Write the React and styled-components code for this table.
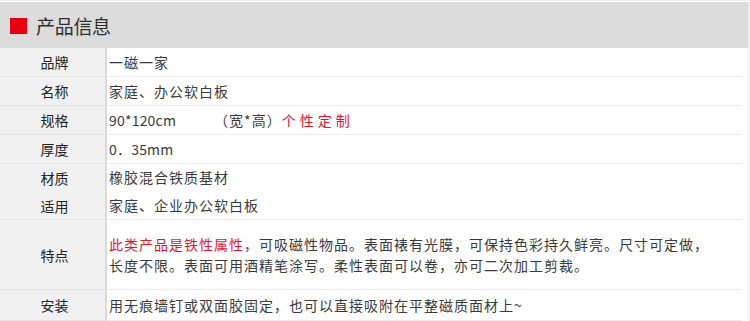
import React from "react";
import styled, { createGlobalStyle } from "styled-components";

const Global = createGlobalStyle`
  body {
    margin: 0;
    background: #fff;
    font-family: "Noto Sans CJK SC", "Noto Sans", sans-serif;
    color: #333;
  }
`;

const Page = styled.div`
  width: 748px;
  padding-top: 1px;
  border-top: 1px solid #eee;
  border-right: 2px solid #f0f0f0;
`;

const Header = styled.header`
  display: flex;
  align-items: center;
  height: 46px;
  background: #dcdcdc;
  padding-left: 10px;
`;

const Square = styled.span`
  width: 17px;
  height: 16px;
  background: #e60012;
  margin-right: 9px;
  margin-top: 2px;
`;

const Title = styled.h2`
  margin: 0;
  font-size: 19px;
  font-weight: 400;
  color: #2e2e2e;
  line-height: 1;
  letter-spacing: -0.3px;
`;

const Table = styled.div`
  display: grid;
  grid-template-columns: 107px 1fr;
`;

const Label = styled.div`
  display: flex;
  align-items: center;
  justify-content: center;
  height: ${(p) => p.$h}px;
  box-sizing: border-box;
  background: #f1f1f1;
  border-right: 2px solid #dadada;
  border-bottom: 1px solid ${(p) => (p.$noLine ? "#f1f1f1" : "#e4e4e4")};
  font-size: 14px;
  color: #222;
  padding-left: 4px;
`;

const Value = styled.div`
  display: flex;
  flex-direction: column;
  justify-content: center;
  height: ${(p) => p.$h}px;
  box-sizing: border-box;
  padding-left: 2px;
  margin-right: 6px;
  border-bottom: 1px solid ${(p) => (p.$noLine ? "#fff" : "#ebebeb")};
  font-size: 14px;
  letter-spacing: 1px;
  line-height: 21px;
  color: #3a3a3a;
  white-space: nowrap;
`;

const Red = styled.span`
  color: #e3162e;
  letter-spacing: ${(p) => (p.$spaced ? "4px" : "inherit")};
`;

const Latin = styled.span`
  letter-spacing: 0.2px;
`;

const Gap = styled.span`
  display: inline-block;
  width: 38px;
`;

const rows = [
  { label: "品牌", h: 29, value: "一磁一家" },
  { label: "名称", h: 29, value: "家庭、办公软白板" },
  {
    label: "规格",
    h: 29,
    value: (
      <span>
        <Latin>90*120cm</Latin>
        <Gap />（宽*高）<Red $spaced>个性定制</Red>
      </span>
    ),
  },
  { label: "厚度", h: 29, value: <Latin>0．35mm</Latin> },
  { label: "材质", h: 28, value: "橡胶混合铁质基材", noLine: true },
  { label: "适用", h: 28, value: "家庭、企业办公软白板" },
  {
    label: "特点",
    h: 70,
    value: (
      <span>
        <Red>此类产品是铁性属性，</Red>可吸磁性物品。表面裱有光膜，可保持色彩持久鲜亮。尺寸可定做，
        <br />
        长度不限。表面可用酒精笔涂写。柔性表面可以卷，亦可二次加工剪裁。
      </span>
    ),
  },
  { label: "安装", h: 31, value: "用无痕墙钉或双面胶固定，也可以直接吸附在平整磁质面材上~" },
];

export default function App() {
  return (
    <>
      <Global />
      <Page>
        <Header>
          <Square />
          <Title>产品信息</Title>
        </Header>
        <Table>
          {rows.map((r) => (
            <React.Fragment key={r.label}>
              <Label $h={r.h} $noLine={r.noLine}>{r.label}</Label>
              <Value $h={r.h} $noLine={r.noLine}>{r.value}</Value>
            </React.Fragment>
          ))}
        </Table>
      </Page>
    </>
  );
}
